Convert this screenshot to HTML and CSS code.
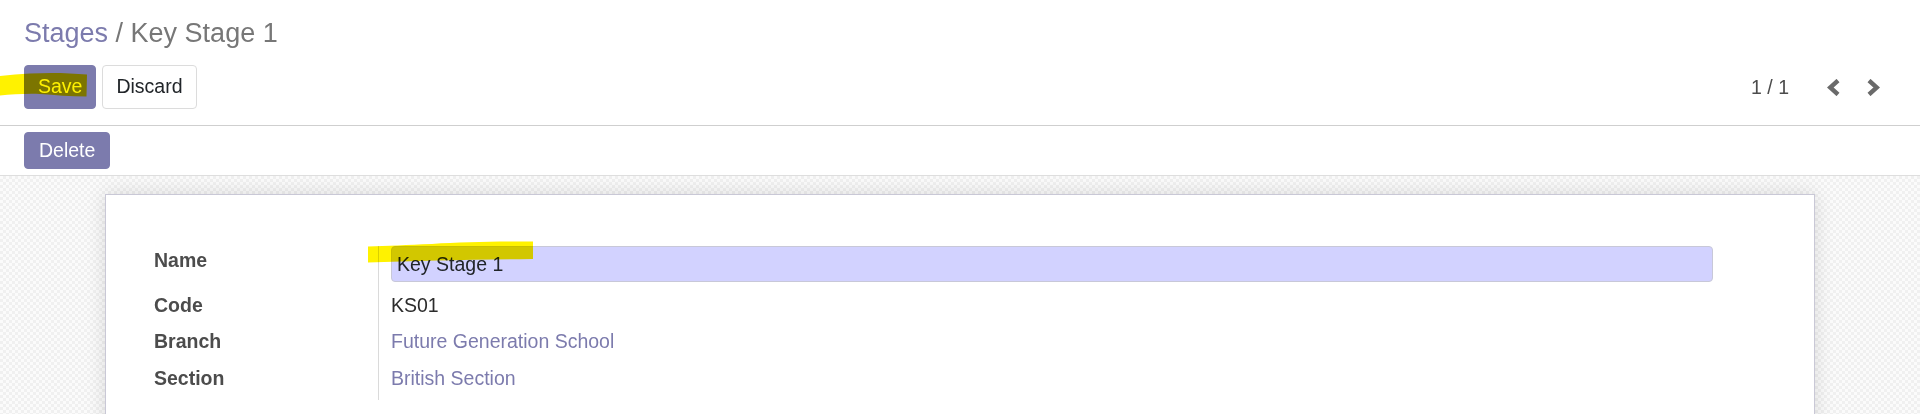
FILE: index.html
```html
<!DOCTYPE html>
<html>
<head>
<meta charset="utf-8">
<link rel="stylesheet" href="styles.css">
</head>
<body>
<div class="cp">
  <div class="breadcrumb"><a class="crumb-link">Stages</a><span class="sep"> / </span><span class="crumb-active">Key Stage 1</span></div>
  <div class="cp-bottom">
    <div class="btns">
      <button class="btn btn-primary">Save</button>
      <button class="btn btn-secondary">Discard</button>
    </div>
    <div class="pager">
      <span class="pager-value">1 / 1</span>
      <span class="pager-btn"><svg width="13" height="17" viewBox="0 0 13 17"><polyline points="11,1.5 3.2,8.5 11,15.5" fill="none" stroke="#6a6a6a" stroke-width="4.4"/></svg></span>
      <span class="pager-btn"><svg width="13" height="17" viewBox="0 0 13 17"><polyline points="2,1.5 9.8,8.5 2,15.5" fill="none" stroke="#6a6a6a" stroke-width="4.4"/></svg></span>
    </div>
  </div>
</div>
<div class="statusbar">
  <button class="btn btn-primary btn-small">Delete</button>
</div>
<div class="sheet-bg">
  <div class="sheet">
    <div class="group">
      <div class="lbl lbl-first">Name</div>
      <div class="val"><div class="input">Key Stage 1</div></div>
      <div class="lbl">Code</div>
      <div class="val">KS01</div>
      <div class="lbl">Branch</div>
      <div class="val link">Future Generation School</div>
      <div class="lbl">Section</div>
      <div class="val link">British Section</div>
    </div>
  </div>
</div>
<svg class="hl hl-save" width="90" height="30" viewBox="0 0 90 30"><path d="M0 5 C10 4 20 3 30 2.5 C50 1.5 70 2 87 3.5 L86.5 25.5 C70 25.5 55 24 40 23 C25 22.5 12 23.5 0 24.5 Z" fill="#fff200"/></svg>
<svg class="hl hl-name" width="170" height="24" viewBox="0 0 170 24"><path d="M1 5.5 C20 5 40 4 65 3 C95 1 130 0.5 166 0.5 L166 18 C130 18.5 100 19 70 19.5 C45 20 22 21 1 21.5 Z" fill="#fff200"/></svg>
</body>
</html>
```
FILE: styles.css
```css
* { box-sizing: border-box; }
html, body { margin: 0; padding: 0; }
body {
  font-family: "Liberation Sans", Arial, sans-serif;
  font-size: 19.5px;
  color: #4c4c4c;
  background: #fff;
  position: relative;
  overflow: hidden;
}
.cp {
  padding: 15px 40px 16px 24px;
  border-bottom: 1px solid #cfcfcf;
}
.breadcrumb {
  font-size: 27px;
  line-height: 36px;
  height: 36px;
  white-space: nowrap;
}
.crumb-link { color: #7c7bad; }
.sep { color: #777; }
.crumb-active { color: #777; }
.cp-bottom {
  margin-top: 14px;
  display: flex;
  align-items: center;
}
.btns { display: flex; gap: 6px; }
.btn {
  font-family: inherit;
  font-size: 19.5px;
  height: 44px;
  padding: 0 13px;
  border-radius: 4px;
  border: 1px solid transparent;
  cursor: pointer;
  line-height: 1;
}
.btn-primary {
  background: #7c7bad;
  border-color: #7c7bad;
  color: #fff;
}
.btn-secondary {
  background: #fff;
  border-color: #dcdcdc;
  color: #212529;
}
.btn-small { height: 37px; padding: 0 14px; }
.pager {
  margin-left: auto;
  display: flex;
  align-items: center;
  color: #4c4c4c;
}
.pager-value { margin-right: 38px; }
.pager-btn { display: flex; width: 13px; height: 17px; }
.pager-btn + .pager-btn { margin-left: 27px; }
.statusbar {
  padding: 6px 24px;
  border-bottom: 1px solid #dedede;
  height: 50px;
  display: flex;
  align-items: flex-start;
}
.sheet-bg {
  background-color: #f7f7f7;
  background-image: repeating-conic-gradient(#f0f0f0 0 25%, #fbfbfb 0 50%);
  background-size: 6px 6px;
  padding-top: 18px;
  min-height: 300px;
}
.sheet {
  width: 1710px;
  margin: 0 auto;
  background: #fff;
  border: 1px solid #c9c8d6;
  box-shadow: 0 0 18px rgba(0, 0, 0, 0.13);
  padding: 51px 101px 80px 48px;
  min-height: 260px;
}
.group {
  display: grid;
  grid-template-columns: 225px 1fr;
  grid-template-rows: 40.5px 36.5px 36.5px 40.5px;
}
.lbl {
  font-weight: bold;
  color: #4c4c4c;
  line-height: 36.5px;
  border-right: 1px solid #dadada;
  white-space: nowrap;
}
.lbl-first { line-height: 29px; }
.val {
  padding-left: 12px;
  line-height: 36.5px;
  color: #2b2b2b;
  white-space: nowrap;
}
.val.link { color: #7c7bad; }
.input {
  height: 36px;
  line-height: 34px;
  background: #d2d2ff;
  border: 1px solid #c8c8d8;
  border-radius: 4px;
  padding: 0 5px;
  color: #212529;
}
.hl {
  position: absolute;
  mix-blend-mode: multiply;
  pointer-events: none;
}
.hl-save { left: 0; top: 71px; }
.hl-name { left: 367px; top: 241px; }
```
